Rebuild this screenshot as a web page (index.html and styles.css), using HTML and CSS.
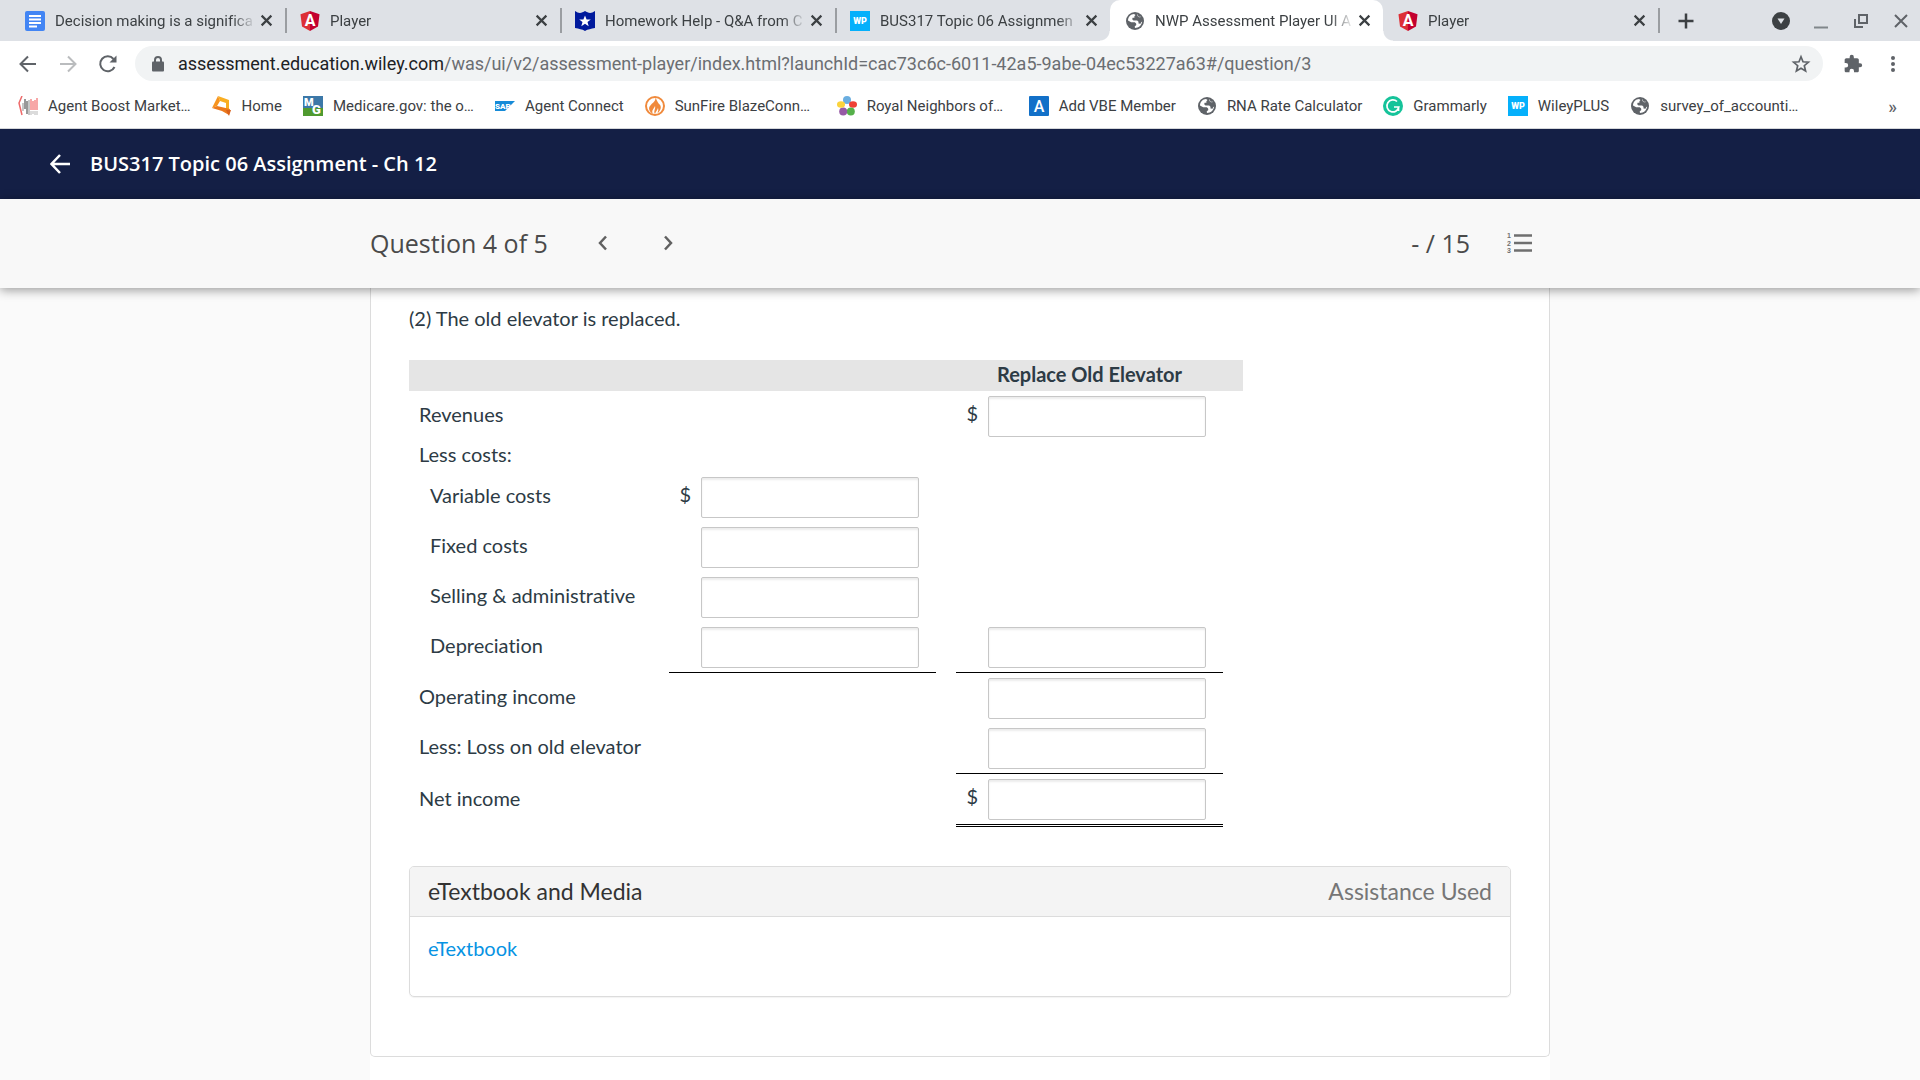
FILE: index.html
```html
<!DOCTYPE html>
<html lang="en">

<head>
    <title>NWP Assessment Player UI Application</title>
    <meta charset="UTF-8">
    <link rel="stylesheet" href="styles.css">
</head>

<body>
    <!-- shared icons -->
    <svg class="sprite" aria-hidden="true">
        <symbol id="close" viewBox="0 0 12 12">
            <path d="M1.500 1.500l9 9M10.500 1.500l-9 9" fill="none" stroke="#3c4043" stroke-width="2" />
        </symbol>
        <symbol id="angular" viewBox="0 0 20 20">
            <path d="M10 0l9.500 3.300-1.500 12.300L10 20z" fill="#c3002f" />
            <path d="M10 0L.5 3.300 2 15.600 10 20z" fill="#dd2f36" />
            <text x="10" y="15" font-size="16" font-weight="700" text-anchor="middle" fill="#fff">A</text>
        </symbol>
        <symbol id="wp" viewBox="0 0 20 20">
            <rect width="20" height="20" fill="#05b0fb" />
            <text x="10" y="13" font-size="9" font-weight="900" text-anchor="middle" fill="#fff">WP</text>
        </symbol>
        <symbol id="globe" viewBox="0 0 20 20">
            <circle cx="10" cy="10" r="9" fill="#5f6368" />
            <path d="M3 9.500C3 5.600 6 3 9 2.900L10.500 4 9.400 5.300v1.500H7.600L7.200 8.300 8.500 9.500h3.700l1.300 1.300v1.600l2 .3.700-1.500 1-.7c-.5 3.700-3.500 6.500-7.200 6.500l-.3-1.600 1.600-1.500-.2-1.400-1.300-1.200H6.200L3 9.500z" fill="#fff" />
            <path d="M12.500 3.400l.2 1.700 1.500.9 1.500-.2" fill="none" stroke="#fff" stroke-width=".5" />
        </symbol>
    </svg>

    <div class="tab-strip">
        <div class="tab">
            <svg class="icon" viewBox="0 0 20 20"><rect x="0" width="20" height="20" rx="2" fill="#4285f4" /><path d="M4 5h12M4 8.500h12M4 12h12M4 15.500h8" stroke="#fff" stroke-width="2" /></svg>
            <span class="tab-title">Decision making is a significa</span>
            <button class="tab-close" aria-label="Close tab"><svg><use href="#close" /></svg></button>
        </div>
        <div class="tab">
            <svg class="icon"><use href="#angular" /></svg>
            <span class="tab-title">Player</span>
            <button class="tab-close" aria-label="Close tab"><svg><use href="#close" /></svg></button>
        </div>
        <div class="tab">
            <svg class="icon" viewBox="0 0 20 20"><path d="M0 0c4 3 7 2 10 0 3 2 6 3 10 0v17c-4 1-7 1-10 3-3-2-6-2-10-3z" fill="#001a9c" /><path d="M10 4.500l1.600 4h4.200l-3.300 2.600 1.200 4.100L10 12.700l-3.700 2.500 1.200-4.100-3.300-2.600h4.200z" fill="#fff" /></svg>
            <span class="tab-title">Homework Help - Q&amp;A from C</span>
            <button class="tab-close" aria-label="Close tab"><svg><use href="#close" /></svg></button>
        </div>
        <div class="tab">
            <svg class="icon"><use href="#wp" /></svg>
            <span class="tab-title">BUS317 Topic 06 Assignmen</span>
            <button class="tab-close" aria-label="Close tab"><svg><use href="#close" /></svg></button>
        </div>
        <div class="tab active">
            <svg class="icon"><use href="#globe" /></svg>
            <span class="tab-title">NWP Assessment Player UI A</span>
            <button class="tab-close" aria-label="Close tab"><svg><use href="#close" /></svg></button>
        </div>
        <div class="tab after-active">
            <svg class="icon"><use href="#angular" /></svg>
            <span class="tab-title">Player</span>
            <button class="tab-close" aria-label="Close tab"><svg><use href="#close" /></svg></button>
        </div>
        <button class="new-tab" aria-label="New tab">
            <svg viewBox="0 0 20 20"><path d="M10 2.500v15M2.500 10h15" stroke="#3c4043" stroke-width="2.500" /></svg>
        </button>
        <div class="window-controls">
            <button aria-label="Search tabs"><svg viewBox="0 0 20 20"><circle cx="10" cy="10" r="9" fill="#3c4043" /><path d="M6.500 7.500h7L10 13z" fill="#dee1e6" /></svg></button>
            <button aria-label="Minimize"><svg viewBox="0 0 20 20"><path d="M3 16.500h14" stroke="#80868b" stroke-width="2" /></svg></button>
            <button aria-label="Restore"><svg viewBox="0 0 20 20"><path d="M8 4h8v8H8zM4 8v8h8" fill="none" stroke="#5f6368" stroke-width="2" /></svg></button>
            <button aria-label="Close window"><svg viewBox="0 0 20 20"><path d="M4 4l12 12M16 4L4 16" stroke="#5f6368" stroke-width="2" /></svg></button>
        </div>
    </div>

    <div class="toolbar">
        <button aria-label="Back"><svg viewBox="0 0 20 20"><path d="M18 10H3M10 2.500L2.500 10l7.500 7.500" fill="none" stroke="#5f6368" stroke-width="2" /></svg></button>
        <button aria-label="Forward"><svg viewBox="0 0 20 20"><path d="M2 10h15M10 2.500l7.500 7.500-7.500 7.500" fill="none" stroke="#babcbe" stroke-width="2" /></svg></button>
        <button aria-label="Reload"><svg viewBox="0 0 20 20"><path d="M16.500 13A7.500 7.500 0 1 1 15.500 5" fill="none" stroke="#5f6368" stroke-width="2" /><path d="M18.500 1.500v7h-7z" fill="#5f6368" /></svg></button>
        <div class="address-bar">
            <svg class="lock" viewBox="0 0 12 16"><path d="M3 6V4a3 3 0 0 1 6 0v2" fill="none" stroke="#5f6368" stroke-width="2" /><rect x="0" y="5.500" width="12" height="10" rx="1" fill="#5f6368" /></svg>
            <a class="url" href="#/question/3"><span class="host">assessment.education.wiley.com</span>/was/ui/v2/assessment-player/index.html?launchId=cac73c6c-6011-42a5-9abe-04ec53227a63#/question/3</a>
            <button class="star" aria-label="Bookmark this page"><svg viewBox="0 0 20 20"><path d="M10 2.800l2 5 5.400.4-4.100 3.500 1.300 5.300L10 14.200 5.400 17l1.300-5.300-4.100-3.500L8 7.800z" fill="none" stroke="#5f6368" stroke-width="1.700" /></svg></button>
        </div>
        <button class="extensions" aria-label="Extensions"><svg viewBox="0 0 24 24"><path d="M20.500 11H19V7c0-1.100-.9-2-2-2h-4V3.500a2.500 2.500 0 0 0-5 0V5H4c-1.100 0-2 .9-2 2v3.800h1.500a2.700 2.700 0 0 1 0 5.400H2V20c0 1.100.9 2 2 2h3.800v-1.500a2.700 2.700 0 0 1 5.400 0V22H17c1.100 0 2-.9 2-2v-4h1.500a2.500 2.500 0 0 0 0-5z" fill="#5f6368" /></svg></button>
        <button aria-label="Menu"><svg viewBox="0 0 20 20"><g fill="#5f6368"><circle cx="10" cy="4" r="2" /><circle cx="10" cy="10" r="2" /><circle cx="10" cy="16" r="2" /></g></svg></button>
    </div>

    <div class="bookmarks">
        <a class="bookmark" href="#">
            <svg class="icon" viewBox="0 0 20 20"><path d="M4 0L1 7l3 12" fill="none" stroke="#ee6a6a" stroke-width="1.500" /><path d="M7 3v10M9 5v13" stroke="#777" stroke-width="1.500" /><path d="M5 7v8M11 4v15" stroke="#b5b5b5" stroke-width="1.500" /><path d="M13 3v11M15 5v9M17 4v10M19 2v12" stroke="#f58a8a" stroke-width="1.500" /><path d="M13 15v4M15 15v3M17 15v4M19 15v4" stroke="#cfcfcf" stroke-width="1.500" /></svg>
            <span class="long">Agent Boost Market…</span>
        </a>
        <a class="bookmark" href="#">
            <svg class="icon" viewBox="0 0 20 20"><path d="M6 0l11 4v11l-3-2V7L8 5z" fill="#f9ae22" /><path d="M6 0l2 5-3 5-5 2z" fill="#f7941e" /><path d="M0 12l5-2 13 3-1 6-7-4z" fill="#ec7a1c" /><path d="M14 14l5 0-2 6z" fill="#d9601a" /></svg>
            <span>Home</span>
        </a>
        <a class="bookmark" href="#">
            <svg class="icon" viewBox="0 0 20 20"><rect width="20" height="12" fill="#3c78a8" /><rect y="12" width="20" height="8" fill="#4f9a2f" /><text x="1" y="10" font-size="11" font-weight="900" fill="#fff">M</text><text x="9" y="18" font-size="13" font-weight="900" fill="#fff">G</text></svg>
            <span class="long">Medicare.gov: the o…</span>
        </a>
        <a class="bookmark" href="#">
            <svg class="icon" viewBox="0 0 20 20"><path d="M0 5h20L10 15H0z" fill="#168bd8" /><text x="0" y="13" font-size="8" font-weight="900" fill="#fff">SAP</text></svg>
            <span>Agent Connect</span>
        </a>
        <a class="bookmark" href="#">
            <svg class="icon" viewBox="0 0 20 20"><circle cx="10" cy="10" r="9" fill="#fff" stroke="#f08a3c" stroke-width="2" /><path d="M10 2c2 3-5 6-6 10 0 3 2 5 4 6-2-4 1-5 2-8 1 3-2 5 0 8 1-3 2-3 3-6 1 3-1 4 0 5 3-3 4-7 1-9-2-2-2-5-4-6z" fill="#f08a3c" /></svg>
            <span class="long">SunFire BlazeConn…</span>
        </a>
        <a class="bookmark" href="#">
            <svg class="icon" viewBox="0 0 20 20"><circle cx="10" cy="4" r="4" fill="#6aaee0" /><ellipse cx="16" cy="8.500" rx="4" ry="3.300" fill="#ef4136" /><circle cx="13.800" cy="15.500" r="4" fill="#55b04a" /><circle cx="6.200" cy="15.500" r="4" fill="#9659a5" /><ellipse cx="4" cy="8.500" rx="4" ry="3.300" fill="#fbd33c" /><circle cx="10" cy="10.500" r="2" fill="#fff" /></svg>
            <span class="long">Royal Neighbors of…</span>
        </a>
        <a class="bookmark" href="#">
            <svg class="icon" viewBox="0 0 20 20"><rect width="20" height="20" rx="1" fill="#1270c8" /><text x="10" y="15.500" font-size="16" font-weight="500" text-anchor="middle" fill="#fff">A</text></svg>
            <span>Add VBE Member</span>
        </a>
        <a class="bookmark" href="#">
            <svg class="icon"><use href="#globe" /></svg>
            <span>RNA Rate Calculator</span>
        </a>
        <a class="bookmark" href="#">
            <svg class="icon" viewBox="0 0 20 20"><circle cx="10" cy="10" r="10" fill="#15c39a" /><path d="M14 5.500A6 6 0 1 0 15.800 11H11M15.500 11v4" fill="none" stroke="#fff" stroke-width="1.700" /></svg>
            <span>Grammarly</span>
        </a>
        <a class="bookmark" href="#">
            <svg class="icon"><use href="#wp" /></svg>
            <span>WileyPLUS</span>
        </a>
        <a class="bookmark" href="#">
            <svg class="icon"><use href="#globe" /></svg>
            <span class="long">survey_of_accounti…</span>
        </a>
        <button class="more-bookmarks" aria-label="More bookmarks">»</button>
    </div>

    <header class="app-header">
        <a class="back-link" href="#" aria-label="Back to assignments"><svg viewBox="0 0 20 20"><path d="M20 10H2M10 1L1.500 10l8.500 9" fill="none" stroke="#fff" stroke-width="2.500" /></svg></a>
        <h1>BUS317 Topic 06 Assignment - Ch 12</h1>
    </header>

    <div class="question-bar">
        <div class="question-bar-inner">
            <h2>Question 4 of 5</h2>
            <button class="previous" aria-label="Previous question"><svg viewBox="0 0 20 20"><path d="M13 3.500L7 10l6 6.500" fill="none" stroke="#616161" stroke-width="2.500" /></svg></button>
            <button class="next" aria-label="Next question"><svg viewBox="0 0 20 20"><path d="M7 3.500l6 6.500-6 6.500" fill="none" stroke="#616161" stroke-width="2.500" /></svg></button>
            <span class="score">- / 15</span>
            <button class="question-list" aria-label="Question list"><svg viewBox="0 0 30 30"><path d="M9 7.500h18M9 15h18M9 22.500h18" stroke="#6f6f6f" stroke-width="2.500" /><g font-size="7" font-weight="900" fill="#6f6f6f"><text x="2" y="10">1</text><text x="2" y="17.500">2</text><text x="2" y="25">3</text></g></svg></button>
        </div>
    </div>

    <main class="content">
        <section class="question">
            <p class="prompt">(2) The old elevator is replaced.</p>

            <table class="statement">
                <colgroup>
                    <col class="col-label">
                    <col class="col-amount">
                    <col class="col-space">
                    <col class="col-amount">
                    <col class="col-space">
                </colgroup>
                <thead>
                    <tr>
                        <th></th>
                        <th></th>
                        <th></th>
                        <th>Replace Old Elevator</th>
                        <th></th>
                    </tr>
                </thead>
                <tbody>
                    <tr>
                        <td><label for="revenues">Revenues</label></td>
                        <td></td>
                        <td></td>
                        <td><div class="amount"><span>$</span><input id="revenues" type="text"></div></td>
                        <td></td>
                    </tr>
                    <tr>
                        <td>Less costs:</td>
                        <td></td>
                        <td></td>
                        <td></td>
                        <td></td>
                    </tr>
                    <tr>
                        <td class="indent"><label for="variable">Variable costs</label></td>
                        <td><div class="amount"><span>$</span><input id="variable" type="text"></div></td>
                        <td></td>
                        <td></td>
                        <td></td>
                    </tr>
                    <tr>
                        <td class="indent"><label for="fixed">Fixed costs</label></td>
                        <td><div class="amount"><input id="fixed" type="text"></div></td>
                        <td></td>
                        <td></td>
                        <td></td>
                    </tr>
                    <tr>
                        <td class="indent"><label for="selling">Selling &amp; administrative</label></td>
                        <td><div class="amount"><input id="selling" type="text"></div></td>
                        <td></td>
                        <td></td>
                        <td></td>
                    </tr>
                    <tr>
                        <td class="indent"><label for="depreciation">Depreciation</label></td>
                        <td class="rule"><div class="amount"><input id="depreciation" type="text"></div></td>
                        <td></td>
                        <td class="rule"><div class="amount"><input type="text" aria-label="Total costs"></div></td>
                        <td></td>
                    </tr>
                    <tr>
                        <td><label for="operating">Operating income</label></td>
                        <td></td>
                        <td></td>
                        <td><div class="amount"><input id="operating" type="text"></div></td>
                        <td></td>
                    </tr>
                    <tr>
                        <td><label for="loss">Less: Loss on old elevator</label></td>
                        <td></td>
                        <td></td>
                        <td class="rule"><div class="amount"><input id="loss" type="text"></div></td>
                        <td></td>
                    </tr>
                    <tr>
                        <td><label for="net">Net income</label></td>
                        <td></td>
                        <td></td>
                        <td class="double-rule"><div class="amount"><span>$</span><input id="net" type="text"></div></td>
                        <td></td>
                    </tr>
                </tbody>
            </table>

            <div class="panel">
                <div class="panel-header">
                    <h3>eTextbook and Media</h3>
                    <span>Assistance Used</span>
                </div>
                <div class="panel-body">
                    <a href="#">eTextbook</a>
                </div>
            </div>
        </section>
    </main>
</body>

</html>
```
FILE: styles.css
```css
* {
    box-sizing: border-box;
}

body {
    margin: 0;
    height: 100vh;
    display: flex;
    flex-direction: column;
    overflow: hidden;
    background-color: #fafafa;
    font-family: Lato, sans-serif;
    font-size: 20px;
    font-variant-ligatures: none;
    color: #2d3b45;
}

button {
    display: flex;
    align-items: center;
    justify-content: center;
    flex-shrink: 0;
    margin: 0;
    padding: 0;
    border: none;
    background: none;
    cursor: pointer;
}

svg {
    display: block;
    width: 20px;
    height: 20px;
    flex-shrink: 0;
}

.sprite {
    display: none;
}

/* Browser tabs */

.tab-strip,
.toolbar,
.bookmarks {
    display: flex;
    align-items: center;
    flex-shrink: 0;
    font-family: Roboto, sans-serif;
    font-size: 15px;
    color: #3c4043;
}

.tab-strip {
    height: 41px;
    padding: 0 9px 0 10px;
    background-color: #dee1e6;
}

.tab {
    flex: 0 1 275px;
    min-width: 0;
    height: 41px;
    padding: 0 12px 0 15px;
    display: flex;
    align-items: center;
}

.tab .icon {
    margin-right: 10px;
}

.tab + .tab,
.new-tab {
    background: linear-gradient(#9a9da1, #9a9da1) left center / 2px 25px no-repeat;
}

.tab + .tab.after-active {
    background: none;
}

.tab + .tab.active {
    position: relative;
    flex-basis: 273px;
    background: #fff;
    border-radius: 10px 10px 0 0;
}

/* curved feet of the active tab */
.tab.active::before,
.tab.active::after {
    content: "";
    position: absolute;
    bottom: 0;
    width: 10px;
    height: 10px;
}

.tab.active::before {
    left: -10px;
    background: radial-gradient(circle at 0 0, transparent 9px, #fff 10px);
}

.tab.active::after {
    right: -10px;
    background: radial-gradient(circle at 100% 0, transparent 9px, #fff 10px);
}

.tab-title {
    flex: 1;
    min-width: 0;
    overflow: hidden;
    white-space: nowrap;
    -webkit-mask-image: linear-gradient(to left, transparent 4px, #000 28px);
    mask-image: linear-gradient(to left, transparent 4px, #000 28px);
}

.tab-close svg {
    width: 13px;
    height: 13px;
}

.new-tab {
    width: 56px;
    height: 41px;
}

.window-controls {
    margin-left: auto;
    display: flex;
    gap: 20px;
}

/* Toolbar */

.toolbar {
    height: 46px;
    padding: 0 17px 1px 18px;
    gap: 20px;
    background-color: #fff;
}

.address-bar {
    flex: 1;
    min-width: 0;
    height: 35px;
    margin-left: -3px;
    padding: 0 12px 0 17px;
    display: flex;
    align-items: center;
    gap: 14px;
    border-radius: 18px;
    background-color: #f1f3f4;
}

.lock {
    width: 12px;
    height: 16px;
}

.url {
    flex: 1;
    min-width: 0;
    overflow: hidden;
    white-space: nowrap;
    font-size: 18px;
    color: #6b6e72;
    text-decoration: none;
}

.host {
    color: #202124;
}

/* Bookmarks */

.bookmarks {
    height: 42px;
    padding: 0 23px 3px 18px;
    gap: 21px;
    background-color: #fff;
    border-bottom: 1px solid #d5d7da;
}

.bookmark {
    display: flex;
    align-items: center;
    gap: 10px;
    color: #3c4043;
    text-decoration: none;
    white-space: nowrap;
}

.bookmark .long {
    min-width: 141px;
}

.more-bookmarks {
    margin-left: auto;
    font-family: Roboto, sans-serif;
    font-size: 18px;
    font-weight: 500;
    color: #5f6368;
}

/* Assignment header */

.app-header {
    flex-shrink: 0;
    height: 70px;
    padding: 0 50px;
    display: flex;
    align-items: center;
    gap: 20px;
    background-color: #141f45;
    color: #fff;
}

.app-header h1 {
    margin: 0;
    padding-bottom: 2px;
    font-family: "Open Sans", sans-serif;
    font-size: 20px;
    font-weight: 600;
}

/* Question bar */

.question-bar {
    position: relative;
    z-index: 1;
    flex-shrink: 0;
    background-color: #f8f8f8;
    box-shadow: 0 2px 10px rgba(0, 0, 0, 0.4);
}

.question-bar-inner {
    max-width: 1180px;
    height: 89px;
    margin: 0 auto;
    padding: 0 15px 2px 0;
    display: flex;
    align-items: center;
    font-family: "Open Sans", sans-serif;
    color: #4a4a4a;
}

.question-bar h2 {
    margin: 0;
    font-size: 25px;
    font-weight: 400;
}

.previous,
.next {
    margin-left: 45px;
}

.score {
    margin-left: auto;
    font-size: 25px;
}

.question-list {
    margin-left: 35px;
}

.question-list svg {
    width: 30px;
    height: 30px;
}

/* Question */

.content {
    flex: 1;
    width: 100%;
    max-width: 1180px;
    margin: 0 auto;
    background-color: #fff;
}

.question {
    padding: 16px 38px 59px;
    border: 1px solid #dcdcdc;
    border-top: none;
    border-radius: 0 0 5px 5px;
}

.prompt {
    margin: 0 0 28px;
    line-height: 28px;
}

.statement {
    table-layout: fixed;
    width: 834px;
    border-collapse: separate;
    border-spacing: 0;
    line-height: 27px;
}

.col-label {
    width: 260px;
}

.col-amount {
    width: 267px;
}

.col-space {
    width: 20px;
}

.statement th {
    height: 31px;
    padding: 0 0 3px;
    background-color: #e5e5e5;
    font-weight: 700;
}

.statement td {
    padding: 0;
}

.statement td:first-child {
    padding: 0 0 4px 10px;
}

.statement td.indent {
    padding-left: 21px;
}

.statement .rule {
    border-bottom: 1px solid #000;
}

.statement .double-rule {
    border-bottom: 3px double #000;
}

.amount {
    padding: 5px 17px 4px 10px;
    display: flex;
    align-items: center;
    justify-content: flex-end;
    gap: 10px;
}

.amount span {
    padding-bottom: 6px;
}

.amount input {
    width: 218px;
    height: 41px;
    padding: 0 10px;
    border: 1px solid #c7c7c7;
    border-radius: 2px;
    box-shadow: inset 0 2px 2px rgba(0, 0, 0, 0.08);
    font: inherit;
    color: inherit;
}

/* eTextbook panel */

.panel {
    margin-top: 39px;
    border: 1px solid #dcdcdc;
    border-radius: 5px;
    box-shadow: 0 1px 1px rgba(0, 0, 0, 0.05);
}

.panel-header {
    height: 50px;
    padding: 0 18px 1px;
    display: flex;
    align-items: center;
    justify-content: space-between;
    background-color: #f4f4f4;
    border-bottom: 1px solid #dcdcdc;
    border-radius: 4px 4px 0 0;
    font-size: 23px;
    color: #767676;
}

.panel-header h3 {
    margin: 0;
    font-size: inherit;
    font-weight: 400;
    color: #333;
}

.panel-body {
    height: 79px;
    padding: 17px 18px;
    line-height: 28px;
}

.panel-body a {
    color: #0693e3;
    text-decoration: none;
}
```
